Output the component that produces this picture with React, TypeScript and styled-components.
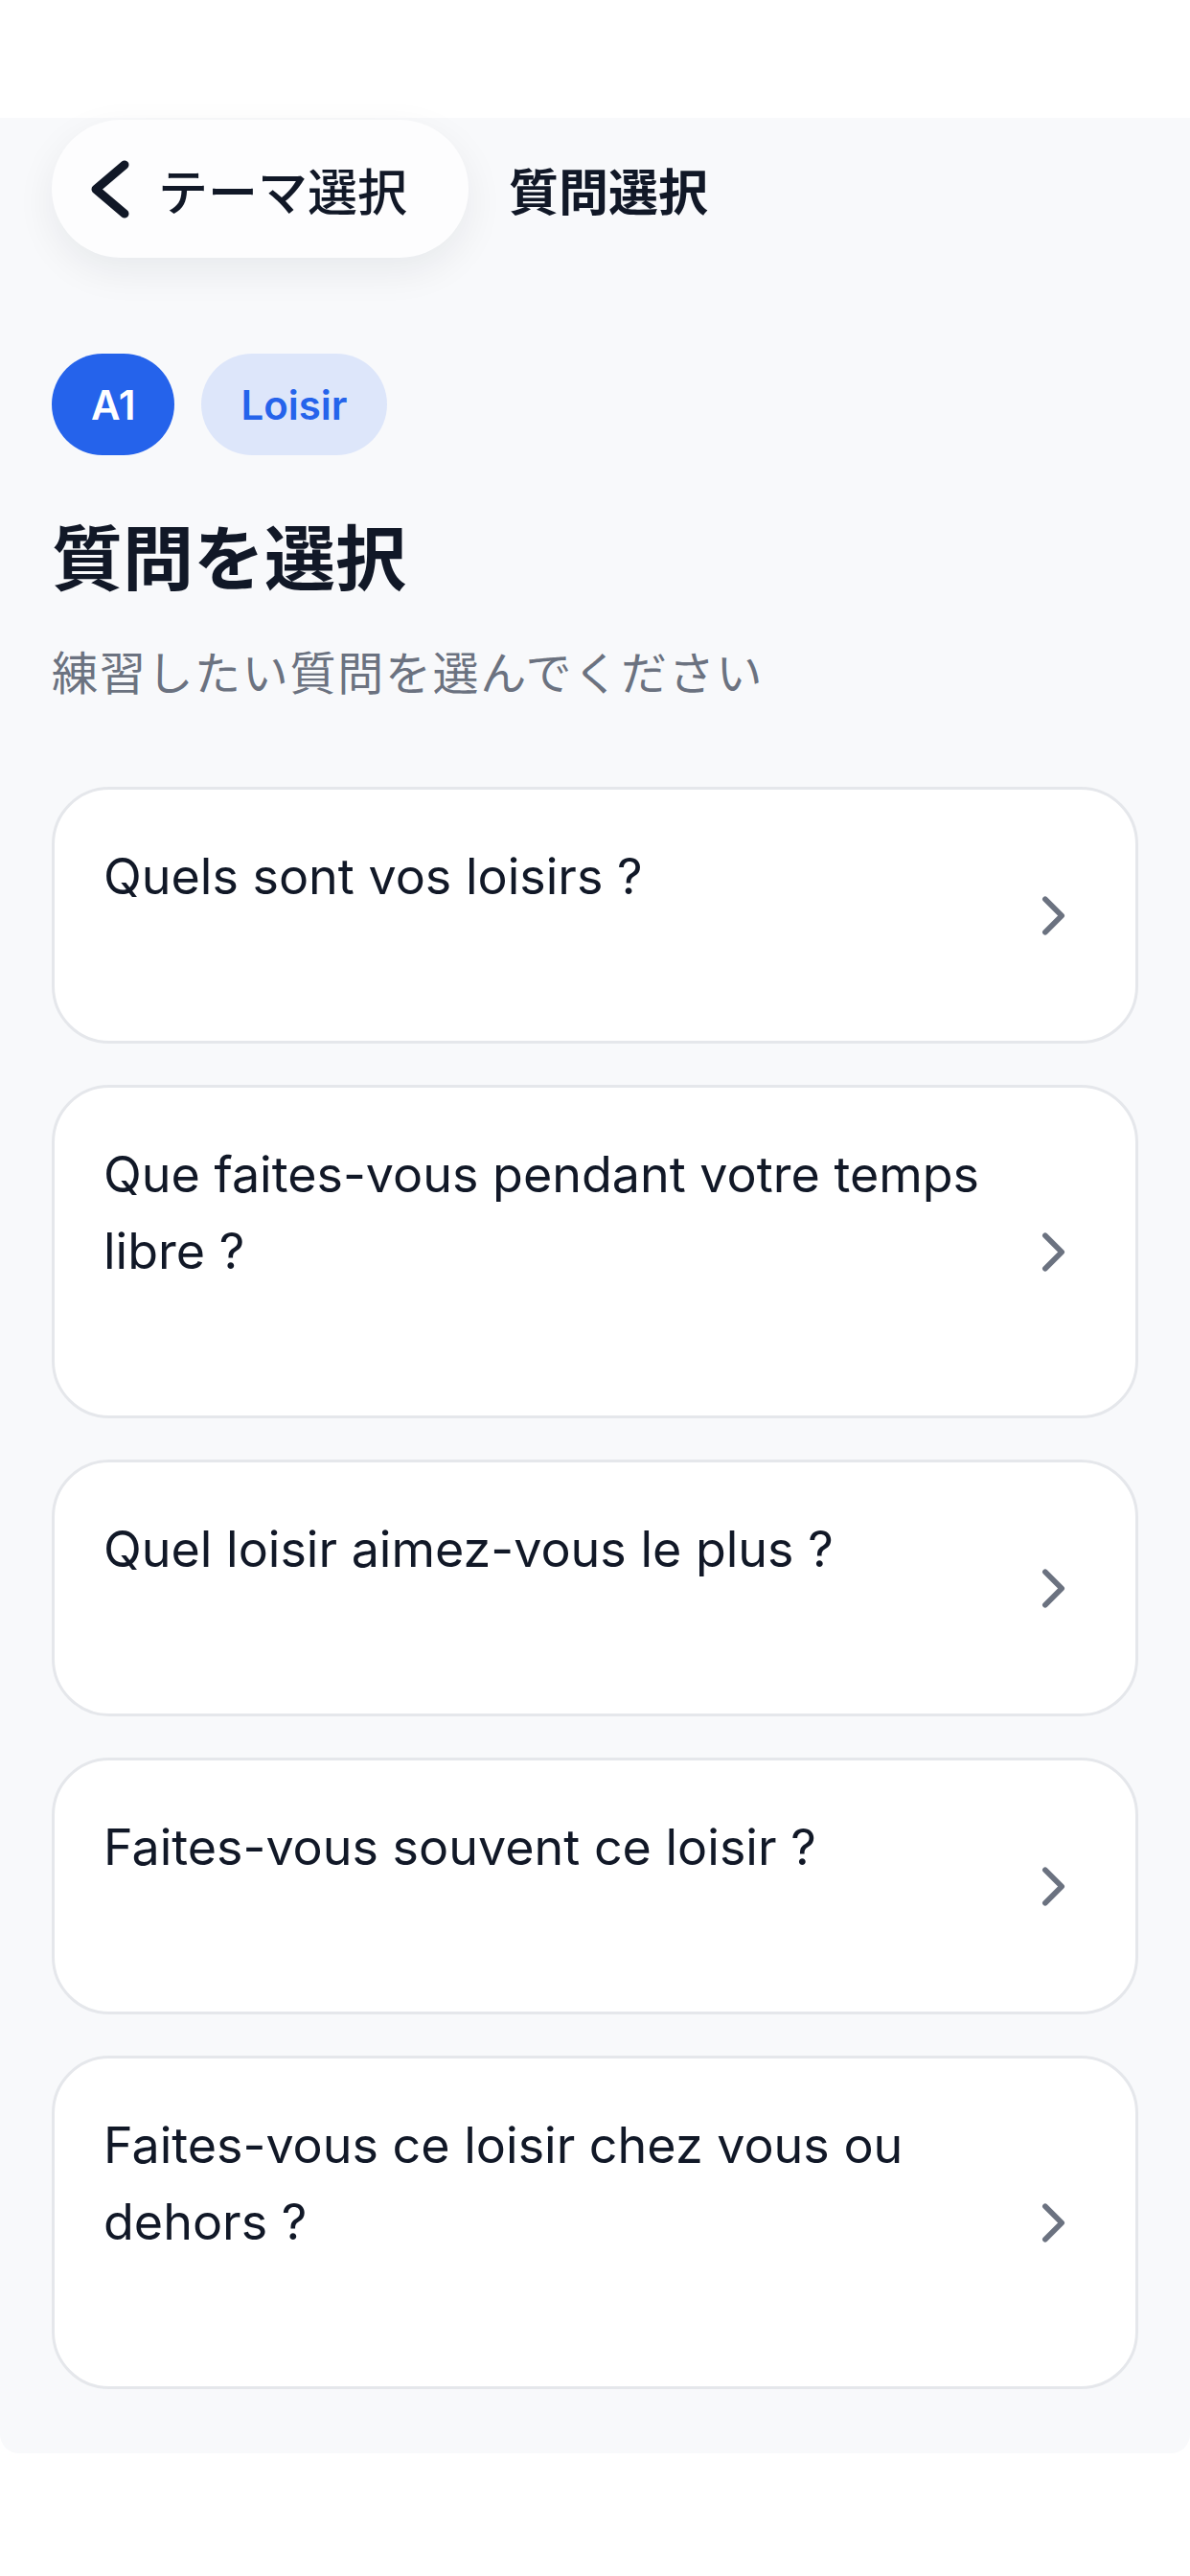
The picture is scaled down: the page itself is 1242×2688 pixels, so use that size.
import React from 'react';
import styled, { createGlobalStyle } from 'styled-components';
import { ChevronRight } from 'lucide-react';

const GlobalStyle = createGlobalStyle`
  html, body {
    margin: 0;
    padding: 0;
    background: #ffffff;
  }
  body {
    font-family: "Inter", "Noto Sans CJK JP", sans-serif;
    color: #111827;
    -webkit-font-smoothing: antialiased;
  }
`;

const Screen = styled.div`
  width: 1242px;
  min-height: 2688px;
  padding-top: 123px;
  box-sizing: border-box;
`;

const Page = styled.main`
  background: #f8f9fb;
  padding: 2px 54px 67px;
  border-radius: 0 0 20px 20px;
`;

const TopBar = styled.header`
  display: flex;
  align-items: center;
  gap: 42px;
`;

const BackButton = styled.button`
  display: flex;
  align-items: center;
  gap: 30px;
  height: 144px;
  padding: 0 64px 0 41px;
  border: none;
  border-radius: 72px;
  background: #fdfdfe;
  box-shadow: 0 14px 40px rgba(17, 24, 39, 0.07);
  font-family: inherit;
  font-size: 52px;
  font-weight: 500;
  color: #111827;
`;

const BarTitle = styled.h1`
  margin: 0;
  font-size: 52px;
  font-weight: 700;
  color: #111827;
`;

const Badges = styled.div`
  display: flex;
  gap: 28px;
  margin-top: 100px;
`;

const Badge = styled.span<{ $solid?: boolean }>`
  display: inline-flex;
  align-items: center;
  height: 106px;
  padding: 0 41px;
  border-radius: 53px;
  font-size: 42px;
  font-weight: 600;
  background: ${(p) => (p.$solid ? '#2563eb' : '#dde6fa')};
  color: ${(p) => (p.$solid ? '#ffffff' : '#2563eb')};
`;

const Heading = styled.h2`
  margin: 60px 0 0;
  font-size: 74px;
  line-height: 96px;
  font-weight: 700;
  color: #111827;
`;

const Subtitle = styled.p`
  margin: 36px 0 0;
  font-size: 48px;
  line-height: 72px;
  letter-spacing: 1.7px;
  color: #6b7280;
`;

const QuestionList = styled.ul`
  list-style: none;
  margin: 82px 0 0;
  padding: 0;
  display: flex;
  flex-direction: column;
  gap: 43px;
`;

const Card = styled.li`
  display: flex;
  align-items: center;
  gap: 24px;
  padding: 51px;
  background: #ffffff;
  border: 3px solid #e5e7eb;
  border-radius: 60px;
`;

const CardBody = styled.div`
  flex: 1;
  display: flex;
  flex-direction: column;
`;

const Question = styled.span`
  font-size: 52px;
  line-height: 80px;
  font-weight: 400;
  color: #111827;
`;

const HintSpace = styled.span`
  height: 80px;
`;

const Arrow = styled(ChevronRight)`
  flex-shrink: 0;
  color: #6b7280;
`;

const questions = [
  'Quels sont vos loisirs ?',
  'Que faites-vous pendant votre temps libre ?',
  'Quel loisir aimez-vous le plus ?',
  'Faites-vous souvent ce loisir ?',
  'Faites-vous ce loisir chez vous ou dehors ?',
];

const BackChevron = () => (
  <svg width="40" height="61" viewBox="0 0 40 61" fill="none">
    <polyline
      points="35,5 5,30.5 35,56"
      stroke="#111827"
      strokeWidth="9"
      strokeLinecap="round"
      strokeLinejoin="round"
    />
  </svg>
);

const App = () => (
  <Screen>
    <GlobalStyle />
    <Page>
      <TopBar>
        <BackButton>
          <BackChevron />
          テーマ選択
        </BackButton>
        <BarTitle>質問選択</BarTitle>
      </TopBar>

      <Badges>
        <Badge $solid>A1</Badge>
        <Badge>Loisir</Badge>
      </Badges>

      <Heading>質問を選択</Heading>
      <Subtitle>練習したい質問を選んでください</Subtitle>

      <QuestionList>
        {questions.map((q) => (
          <Card key={q}>
            <CardBody>
              <Question>{q}</Question>
              <HintSpace />
            </CardBody>
            <Arrow size={69} strokeWidth={2} />
          </Card>
        ))}
      </QuestionList>
    </Page>
  </Screen>
);

export default App;
